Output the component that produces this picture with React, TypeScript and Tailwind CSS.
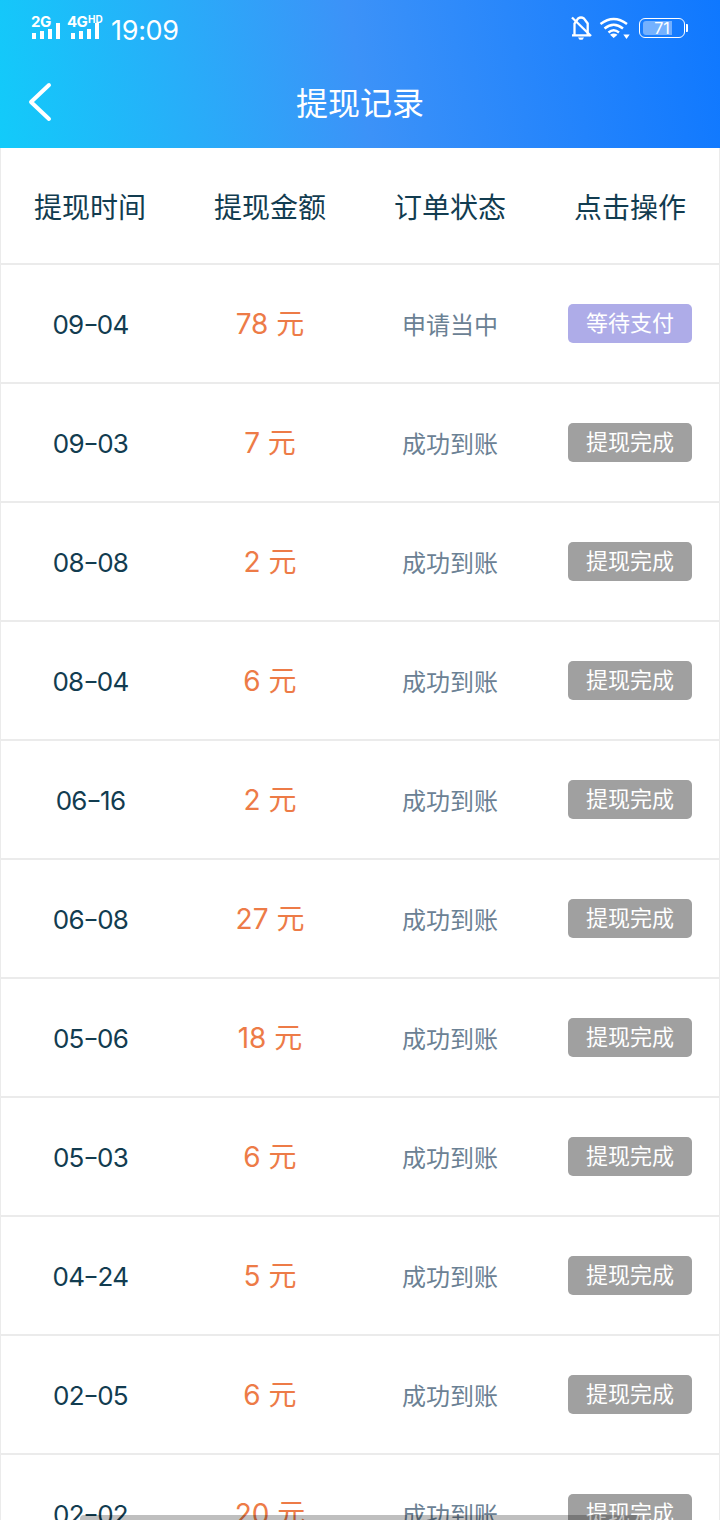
type Row = { date: string; amount: number; status: string; action: string; pending?: boolean };

const done = (date: string, amount: number): Row => ({ date, amount, status: '成功到账', action: '提现完成' });

const rows: Row[] = [
  { date: '09-04', amount: 78, status: '申请当中', action: '等待支付', pending: true },
  done('09-03', 7),
  done('08-08', 2),
  done('08-04', 6),
  done('06-16', 2),
  done('06-08', 27),
  done('05-06', 18),
  done('05-03', 6),
  done('04-24', 5),
  done('02-05', 6),
  done('02-02', 20),
];

const headings = ['提现时间', '提现金额', '订单状态', '点击操作'];

function Bars() {
  return (
    <svg width="28" height="16" viewBox="0 0 28 16" fill="white" className="block">
      <rect x="0" y="10" width="4" height="6" />
      <rect x="8" y="8" width="4" height="8" />
      <rect x="16" y="6" width="4" height="10" />
      <rect x="24" y="0" width="4" height="16" />
    </svg>
  );
}

function StatusBar() {
  return (
    <div className="flex h-[56px] items-start justify-between pr-[32px] pl-[31px]">
      <div className="flex items-start">
        <div className="relative mt-[23px] w-[37px] pl-px">
          <span className="absolute top-[-8px] left-0 text-[15px] leading-[14px] font-bold tracking-[-0.4px]">2G</span>
          <Bars />
        </div>
        <div className="relative mt-[23px] w-[43px] pl-[3px]">
          <span className="absolute top-[-8px] left-[-1px] text-[15px] leading-[14px] font-bold tracking-[-0.6px]">4G</span>
          <span className="absolute top-[-9px] left-[20px] text-[10px] leading-[10px] font-bold">HD</span>
          <Bars />
        </div>
        <span className="mt-[17px] text-[27px] leading-[28px] tracking-[-0.3px]">19:09</span>
      </div>
      <div className="flex items-start pt-[15px]">
        <svg width="22" height="26" viewBox="0 0 22 26" fill="none" stroke="white" strokeWidth="2.300" className="block">
          <path d="M2 20.300H20M4.500 20V8.500L8 3.500Q11 1.500 14 3.500L17.700 8.500V20" />
          <path d="M8 22.500H14L12.500 24.700H9.500Z" fill="white" stroke="none" />
          <path d="M2 2.500L21 21" />
        </svg>
        <svg width="32" height="26" viewBox="0 0 32 26" fill="none" stroke="white" strokeWidth="2.400" className="ml-[7px] block">
          <path d="M1.500 9Q14.700-1 28 9M5.500 13.500Q14.700 5.800 24 13.500M9.500 17.500Q14.700 13 20 17.500" />
          <path d="M11 19.800Q14.700 17 18.500 19.800L14.700 23ZM24.300 19.500H30.700L27.500 24Z" fill="white" stroke="none" />
        </svg>
        <div className="mt-[3px] ml-[8px] flex items-center">
          <div className="relative flex h-[20px] w-[46px] items-center justify-center rounded-[6px] border border-white text-[16px] leading-[16px]">
            <span className="absolute top-[2px] left-[3px] h-[14px] w-[29px] rounded-l-[3px] bg-white/40" />
            <span className="relative">71</span>
          </div>
          <span className="ml-px h-[8px] w-[2px] rounded-r-[1px] bg-white" />
        </div>
      </div>
    </div>
  );
}

function DateText({ value }: { value: string }) {
  const [month, day] = value.split('-');
  return (
    <span className="pt-[3px] pl-px text-[26px] leading-[36px] font-[370] tracking-[-0.7px] text-[#123c50]">
      {month}
      <span className="relative -top-px inline-block scale-x-[1.3] scale-y-90 px-px">-</span>
      {day}
    </span>
  );
}

export default function App() {
  return (
    <div className="relative flex h-[1520px] w-[720px] flex-col overflow-hidden bg-white font-[Inter,'Noto_Sans_CJK_SC',sans-serif]">
      <header className="h-[148px] shrink-0 bg-[linear-gradient(80deg,#12cbfa_0%,#3c92f8_50%,#0f78ff_100%)] text-white">
        <StatusBar />
        <div className="grid h-[92px] grid-cols-[80px_1fr_80px] items-center">
          <svg width="26" height="40" viewBox="0 0 26 40" fill="none" stroke="white" strokeWidth="4" strokeLinecap="round" strokeLinejoin="round" className="ml-[27px] block">
            <path d="M22 3L4 20L22 37" />
          </svg>
          <h1 className="pt-[4px] text-center text-[32px] leading-[40px]">提现记录</h1>
        </div>
      </header>
      <main className="shrink-0 border-x border-[#ebebeb]">
        <div className="-mx-px grid h-[117px] grid-cols-4 items-center border-b-2 border-[#ebebeb] pt-[5px] text-center text-[28px] leading-[40px] text-[#123c50]">
          {headings.map((h) => (
            <span key={h}>{h}</span>
          ))}
        </div>
        {rows.map((r) => (
          <div key={r.date} className="-mx-px grid h-[119px] grid-cols-4 items-center border-b-2 border-[#ebebeb] text-center">
            <DateText value={r.date} />
            <span className="pt-px text-[28px] leading-[40px] text-[#ed7b47]">{r.amount} 元</span>
            <span className="pt-[4px] text-[24px] leading-[36px] text-[#6b8194]">{r.status}</span>
            <span
              className={`mx-auto h-[39px] w-[124px] rounded-[5px] text-[22px] leading-[39px] text-white ${r.pending ? 'bg-[#aeace8]' : 'bg-[#a0a0a0]'}`}
            >
              {r.action}
            </span>
          </div>
        ))}
      </main>
      <div className="absolute bottom-0 left-[80px] h-[5px] w-[560px] rounded-t-[4px] bg-black/25" />
    </div>
  );
}
